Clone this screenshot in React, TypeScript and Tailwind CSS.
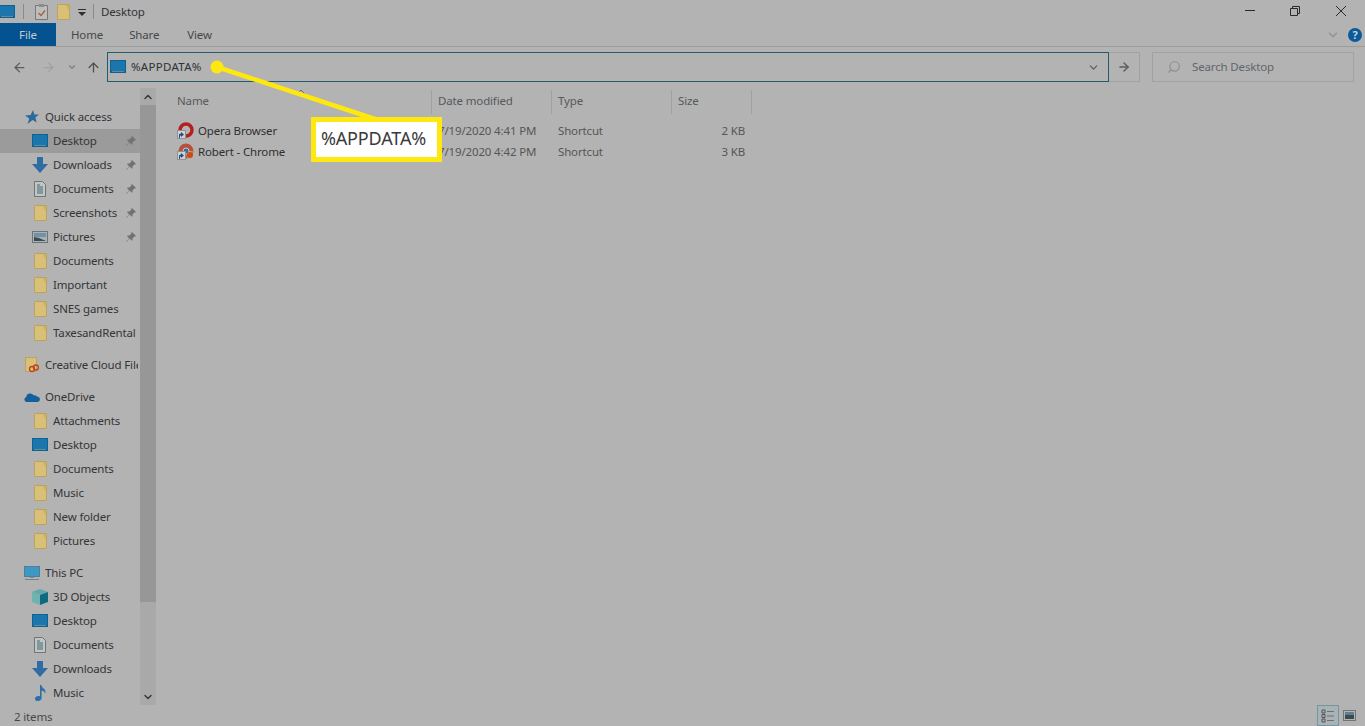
import { ArrowLeft, ArrowRight, ArrowUp, ChevronDown, ChevronUp, Search } from "lucide-react";

type NavItem = { label: string; icon: string; pinned?: boolean; top?: boolean; active?: boolean; gap?: boolean };

const navItems: NavItem[] = [
  { label: "Quick access", icon: "star", top: true },
  { label: "Desktop", icon: "desktop", pinned: true, active: true },
  { label: "Downloads", icon: "download", pinned: true },
  { label: "Documents", icon: "doc", pinned: true },
  { label: "Screenshots", icon: "folder", pinned: true },
  { label: "Pictures", icon: "picture", pinned: true },
  { label: "Documents", icon: "folder" },
  { label: "Important", icon: "folder" },
  { label: "SNES games", icon: "folder" },
  { label: "TaxesandRental", icon: "folder" },
  { label: "Creative Cloud Files", icon: "cloudfolder", top: true, gap: true },
  { label: "OneDrive", icon: "onedrive", top: true, gap: true },
  { label: "Attachments", icon: "folder" },
  { label: "Desktop", icon: "desktop" },
  { label: "Documents", icon: "folder" },
  { label: "Music", icon: "folder" },
  { label: "New folder", icon: "folder" },
  { label: "Pictures", icon: "folder" },
  { label: "This PC", icon: "pc", top: true, gap: true },
  { label: "3D Objects", icon: "cube" },
  { label: "Desktop", icon: "desktop" },
  { label: "Documents", icon: "doc" },
  { label: "Downloads", icon: "download" },
  { label: "Music", icon: "music" },
];

const columns = [
  { label: "Name", width: "w-[256px]" },
  { label: "Date modified", width: "w-[120px]" },
  { label: "Type", width: "w-[120px]" },
  { label: "Size", width: "w-[80px]" },
];

const DesktopIcon = () => (
  <svg width="16" height="14" viewBox="0 0 16 14">
    <rect width="16" height="13" fill="#0f618f" />
    <rect x="1" y="1" width="14" height="10" fill="#1b76ad" />
    <rect x="2" y="11" width="12" height="1" fill="#5f8ba3" />
  </svg>
);

const FolderIcon = () => (
  <svg width="13" height="16" viewBox="0 0 13 16">
    <rect width="13" height="16" fill="#d1b86f" />
    <path d="M0 0h8l5 9v7H0z" fill="#d8c078" />
    <path d="M8 0l5 9V0z" fill="#c6ad64" opacity="0.4" />
    <path d="M.5 .5h12v15H.5z" fill="none" stroke="#bda45c" />
  </svg>
);

const DownloadIcon = () => (
  <svg width="16" height="16" viewBox="0 0 16 16">
    <path d="M5 0h6v7h5l-8 9-8-9h5z" fill="#2f6ca3" />
  </svg>
);

const DocIcon = () => (
  <svg width="12" height="16" viewBox="0 0 12 16">
    <path d="M.5 .5h8l3 3v12H.5z" fill="#c3c5c5" stroke="#6d7577" />
    <path d="M3 4h3M3 6h6M3 8h6M3 10h6M3 12h6" stroke="#3d6e72" />
  </svg>
);

const PictureIcon = () => (
  <svg width="16" height="12" viewBox="0 0 16 12">
    <rect x=".5" y=".5" width="15" height="11" fill="#aab2b5" stroke="#6c7477" />
    <rect x="2" y="2" width="12" height="4" fill="#6e92a8" />
    <path d="M2 6l5 1 7 3H2z" fill="#3e4a4c" />
  </svg>
);

const StarIcon = () => (
  <svg width="14" height="14" viewBox="0 0 14 14">
    <path d="M8 0l1.4 4.4H14l-3.6 3 1.3 5L7.6 10 2.6 14l1.6-5.4L0 5.6l5.6-.6z" fill="#2a6b9f" />
  </svg>
);

const CloudFolderIcon = () => (
  <svg width="14" height="16" viewBox="0 0 14 16">
    <rect x=".5" y=".5" width="11" height="14" fill="#d8c078" stroke="#bda45c" />
    <circle cx="7" cy="12" r="2.5" fill="none" stroke="#c2401c" strokeWidth="1.3" />
    <circle cx="11" cy="10.5" r="2.5" fill="none" stroke="#c2401c" strokeWidth="1.3" />
  </svg>
);

const OneDriveIcon = () => (
  <svg width="16" height="10" viewBox="0 0 16 10">
    <path d="M2.5 10A2.5 2.5 0 0 1 2 5.2 4.2 4.2 0 0 1 9.6 3.2 3.4 3.4 0 0 1 13 4.6 2.7 2.7 0 0 1 13.4 10z" fill="#14609c" />
  </svg>
);

const PcIcon = () => (
  <svg width="16" height="14" viewBox="0 0 16 14">
    <rect x=".5" y=".5" width="15" height="10" fill="#3f97c4" stroke="#4d7f99" />
    <path d="M6 11h4v1H6z" fill="#7f8f95" />
    <path d="M1 13h14v1H1z" fill="#76858b" />
  </svg>
);

const CubeIcon = () => (
  <svg width="16" height="16" viewBox="0 0 16 16">
    <path d="M8 0l8 3-8 3-8-3z" fill="#5fa8ac" />
    <path d="M0 3l8 3v10l-8-3z" fill="#6fb3b0" />
    <path d="M16 3L8 6v10l8-3z" fill="#0f6a80" />
  </svg>
);

const MusicIcon = () => (
  <svg width="11" height="16" viewBox="0 0 11 16">
    <path d="M5 0h1.4c.4 2.2 1.6 3 3 4.2 1.4 1.3 1.4 3.2.6 4.8.1-1.8-1-3-3.4-3.6V13c0 1.8-1.8 3-4 3S0 15 0 13.6 1.6 11 3.4 11c.6 0 1.200.1 1.600.3z" fill="#2c6ea6" />
  </svg>
);

const PinIcon = () => (
  <svg width="10" height="10" viewBox="0 0 10 10">
    <path d="M6 0l4 4-1 .6-.6-.2L6.400 6.400 6.600 8l-.8.8-2.200-2.200L.6 9.800 0 9.400l3.200-3L1 4.200 1.800 3.400l1.600.2L5.400 1.600 5.200 1z" fill="#6f7374" />
  </svg>
);

const icons: Record<string, () => React.ReactElement> = {
  star: StarIcon,
  desktop: DesktopIcon,
  download: DownloadIcon,
  doc: DocIcon,
  folder: FolderIcon,
  picture: PictureIcon,
  cloudfolder: CloudFolderIcon,
  onedrive: OneDriveIcon,
  pc: PcIcon,
  cube: CubeIcon,
  music: MusicIcon,
};

const ShortcutArrow = () => (
  <span className="absolute left-0 bottom-0 flex h-[9px] w-[9px] items-center justify-center border border-[#8f9192] bg-[#d0d2d2]">
    <svg width="7" height="7" viewBox="0 0 7 7">
      <path d="M1 7V4c0-1 1-1.500 2-1.500V1l3 2.500L3 6V4.500C2 4.500 2 5 2 7z" fill="#1c4f86" />
    </svg>
  </span>
);

const OperaIcon = () => (
  <span className="relative block h-[17px] w-[17px]">
    <svg width="17" height="17" viewBox="0 0 17 17">
      <circle cx="9" cy="8" r="6" fill="none" stroke="#b4201f" strokeWidth="3.500" />
    </svg>
    <ShortcutArrow />
  </span>
);

const ChromeIcon = () => (
  <span className="relative block h-[17px] w-[17px]">
    <svg width="17" height="17" viewBox="0 0 17 17">
      <circle cx="9" cy="8" r="7.500" fill="#b7503f" />
      <path d="M9 8L2 12a7.500 7.500 0 0 0 7 3.500z" fill="#4b8a4e" />
      <path d="M9 8l7 0a7.500 7.500 0 0 1-6 7z" fill="#c9972f" />
      <circle cx="9" cy="8" r="3" fill="#2b6ea8" stroke="#c9cbcb" />
      <circle cx="13" cy="12" r="3" fill="#c94a1c" />
    </svg>
    <ShortcutArrow />
  </span>
);

const files = [
  { name: "Opera Browser", date: "7/19/2020 4:41 PM", size: "2 KB", icon: <OperaIcon /> },
  { name: "Robert - Chrome", date: "7/19/2020 4:42 PM", size: "3 KB", icon: <ChromeIcon /> },
];

const Sidebar = () => (
  <div className="flex w-[140px] shrink-0 flex-col overflow-hidden pt-[17px]">
    {navItems.map((item, index) => {
      const Icon = icons[item.icon];
      return (
        <div key={index} className={item.gap ? "pt-[8px]" : ""}>
          <div className={`relative flex h-[24px] items-center whitespace-nowrap ${item.top ? "pl-[23px]" : "pl-[31px]"} ${item.active ? "bg-[#9b9b9b]" : ""}`}>
            <span className="mr-[4px] flex h-[16px] w-[18px] shrink-0 items-center justify-center">
              <Icon />
            </span>
            <span className="max-w-[93px] overflow-hidden pb-[1px]">{item.label}</span>
            {item.pinned && (
              <span className="absolute left-[126px] top-[7px]">
                <PinIcon />
              </span>
            )}
          </div>
        </div>
      );
    })}
  </div>
);

const Scrollbar = () => (
  <div className="flex w-[16px] shrink-0 flex-col bg-[#a9a9a9]">
    <div className="flex h-[17px] items-center justify-center">
      <ChevronUp size={12} strokeWidth={3} color="#3a3a3a" />
    </div>
    <div className="h-[497px] bg-[#979797]" />
    <div className="flex-1" />
    <div className="flex h-[17px] items-center justify-center">
      <ChevronDown size={12} strokeWidth={3} color="#3a3a3a" />
    </div>
  </div>
);

const FileList = () => (
  <div className="relative flex-1 pl-[20px]">
    <div className="mt-[2px] flex h-[24px] text-[#555a5c]">
      {columns.map((col) => (
        <div key={col.label} className={`${col.width} flex h-[24px] items-center border-r border-[#a0a0a0] pb-[2px] ${col.label === "Name" ? "pl-[1px]" : "pl-[6px]"}`}>
          {col.label}
        </div>
      ))}
    </div>
    <div className="mt-[6px] flex flex-col">
      {files.map((file) => (
        <div key={file.name} className="flex h-[21px] items-center">
          <div className="flex w-[256px] items-center gap-[4px] pl-[1px] text-[#2f2f2f]">
            {file.icon}
            {file.name}
          </div>
          <div className="w-[120px] pl-[6px] text-[#565656]">{file.date}</div>
          <div className="w-[120px] pl-[6px] text-[#565656]">Shortcut</div>
          <div className="w-[73px] text-right text-[#565656]">{file.size}</div>
        </div>
      ))}
    </div>
    {/* sort caret */}
    <svg className="absolute left-[141px] top-[1px]" width="8" height="5" viewBox="0 0 8 5">
      <path d="M.5 4.500L4 1l3.500 3.500" fill="none" stroke="#6e6e6e" />
    </svg>
  </div>
);

export default function App() {
  return (
    <div
      className="relative flex h-[726px] w-[1365px] flex-col overflow-hidden bg-[#b3b3b3] text-[11.5px] tracking-[-0.15px] text-[#333536]"
      style={{ fontFamily: '"Noto Sans", "Open Sans", sans-serif' }}
    >
      {/* title bar */}
      <div className="flex h-[23px] items-center">
        <span className="-ml-[1px] flex w-[17px]">
          <DesktopIcon />
        </span>
        <span className="ml-[7px] h-[15px] w-px bg-[#8a8a8a]" />
        <svg className="ml-[11px]" width="13" height="16" viewBox="0 0 13 16">
          <path d="M.5 1.500h12v14H.5z" fill="#bdbdbd" stroke="#77787a" />
          <rect x="4" y="0" width="5" height="3" fill="#8c8c8c" />
          <path d="M3.500 9l2.500 2.500 4-5" fill="none" stroke="#a5603f" strokeWidth="1.300" />
        </svg>
        <span className="ml-[9px] flex">
          <FolderIcon />
        </span>
        <svg className="ml-[8px]" width="8" height="8" viewBox="0 0 8 8">
          <path d="M0 1h8v1H0zM0 4h8L4 8z" fill="#2f2f2f" />
        </svg>
        <span className="ml-[7px] h-[15px] w-px bg-[#8a8a8a]" />
        <span className="ml-[7px] text-[#2f3233]">Desktop</span>
        <div className="flex-1" />
        <div className="flex items-center pb-[2px] pr-[19px]">
          <span className="h-px w-[10px] bg-[#2b2b2b]" />
          <svg className="ml-[35px]" width="10" height="10" viewBox="0 0 10 10">
            <path d="M.5 2.500h7v7h-7zM2.500 2.500v-2h7v7h-2" fill="none" stroke="#2b2b2b" />
          </svg>
          <svg className="ml-[36px]" width="10" height="10" viewBox="0 0 10 10">
            <path d="M0 0l10 10M10 0L0 10" fill="none" stroke="#2b2b2b" />
          </svg>
        </div>
      </div>

      {/* ribbon tabs */}
      <div className="flex h-[24px] items-center border-b border-[#9c9c9c]">
        <div className="flex h-[23px] w-[56px] items-center justify-center bg-[#04528f] text-[#c4c9cc]">File</div>
        <span className="ml-[15px] pt-[1px] text-[#44484a]">Home</span>
        <span className="ml-[26px] pt-[1px] text-[#44484a]">Share</span>
        <span className="ml-[28px] pt-[1px] text-[#44484a]">View</span>
        <div className="flex-1" />
        <ChevronDown size={14} color="#8c8f90" />
        <span className="ml-[8px] mr-[3px] flex h-[14px] w-[14px] items-center justify-center rounded-full bg-[#0b5a9c] text-[11px] font-bold leading-none text-[#c8d2d8]">?</span>
      </div>

      {/* address row */}
      <div className="flex h-[41px] items-start pt-[5px]">
        <div className="flex h-[30px] w-[107px] items-center">
          <ArrowLeft className="ml-[12px]" size={15} color="#5a5c5d" />
          <ArrowRight className="ml-[14px]" size={15} color="#a0a2a2" />
          <ChevronDown className="ml-[11px]" size={10} strokeWidth={3} color="#808283" />
          <ArrowUp className="ml-[9px]" size={15} color="#4a4c4d" />
        </div>
        <div className="flex h-[30px] w-[1002px] items-center border border-[#275a69] pl-[2px]">
          <DesktopIcon />
          <span className="ml-[5px] tracking-[0.3px] text-[#2f3233]">%APPDATA%</span>
          <div className="flex-1" />
          <ChevronDown className="mr-[8px]" size={13} color="#55585a" />
        </div>
        <div className="flex h-[30px] w-[31px] items-center justify-center border border-l-0 border-[#a2a2a2]">
          <ArrowRight size={14} strokeWidth={2.500} color="#5a5c5d" />
        </div>
        <div className="ml-[12px] flex h-[30px] w-[202px] items-center border border-[#a2a2a2] pl-[14px] text-[#62666a]">
          <Search className="-scale-x-100" size={14} color="#8c8f90" />
          <span className="ml-[11px]">Search Desktop</span>
        </div>
      </div>

      {/* main */}
      <div className="flex min-h-0 flex-1">
        <Sidebar />
        <Scrollbar />
        <FileList />
      </div>

      {/* status bar */}
      <div className="flex h-[21px] items-center pl-[14px]">
        <span className="pt-[2px] text-[#44484a]">2 items</span>
        <div className="flex-1" />
        <div className="mr-[25px] flex h-[21px] w-[22px] items-center justify-center border border-[#6f97a6] bg-[#a9b3b6]">
          <svg width="14" height="14" viewBox="0 0 14 14">
            <path d="M1 1h3v3H1zM1 5.500h3v3H1zM1 10h3v3H1z" fill="none" stroke="#4e5557" />
            <path d="M6 2.500h7M6 7h7M6 11.500h7" stroke="#6b7173" />
          </svg>
        </div>
        <svg className="mr-[9px] -ml-[21px]" width="13" height="11" viewBox="0 0 13 11">
          <rect x=".5" y=".5" width="12" height="10" fill="#b0b6b8" stroke="#707678" />
          <rect x="2" y="2" width="9" height="3" fill="#5f7f93" />
          <rect x="2" y="5" width="9" height="4" fill="#3e4a4c" />
        </svg>
      </div>

      {/* callout overlay */}
      <svg className="absolute left-0 top-0" width="1365" height="726" viewBox="0 0 1365 726">
        <path d="M217 67L378 120" stroke="#fee80f" strokeWidth="4.500" />
        <circle cx="217" cy="67" r="6.500" fill="#fee80f" />
      </svg>
      <div className="absolute left-[311px] top-[117px] flex h-[45px] w-[131px] items-center justify-center border-[5px] border-[#fee80f] bg-white pb-[2px] pr-[6px] text-[18px] text-[#3a3a3a]">
        %APPDATA%
      </div>
    </div>
  );
}
